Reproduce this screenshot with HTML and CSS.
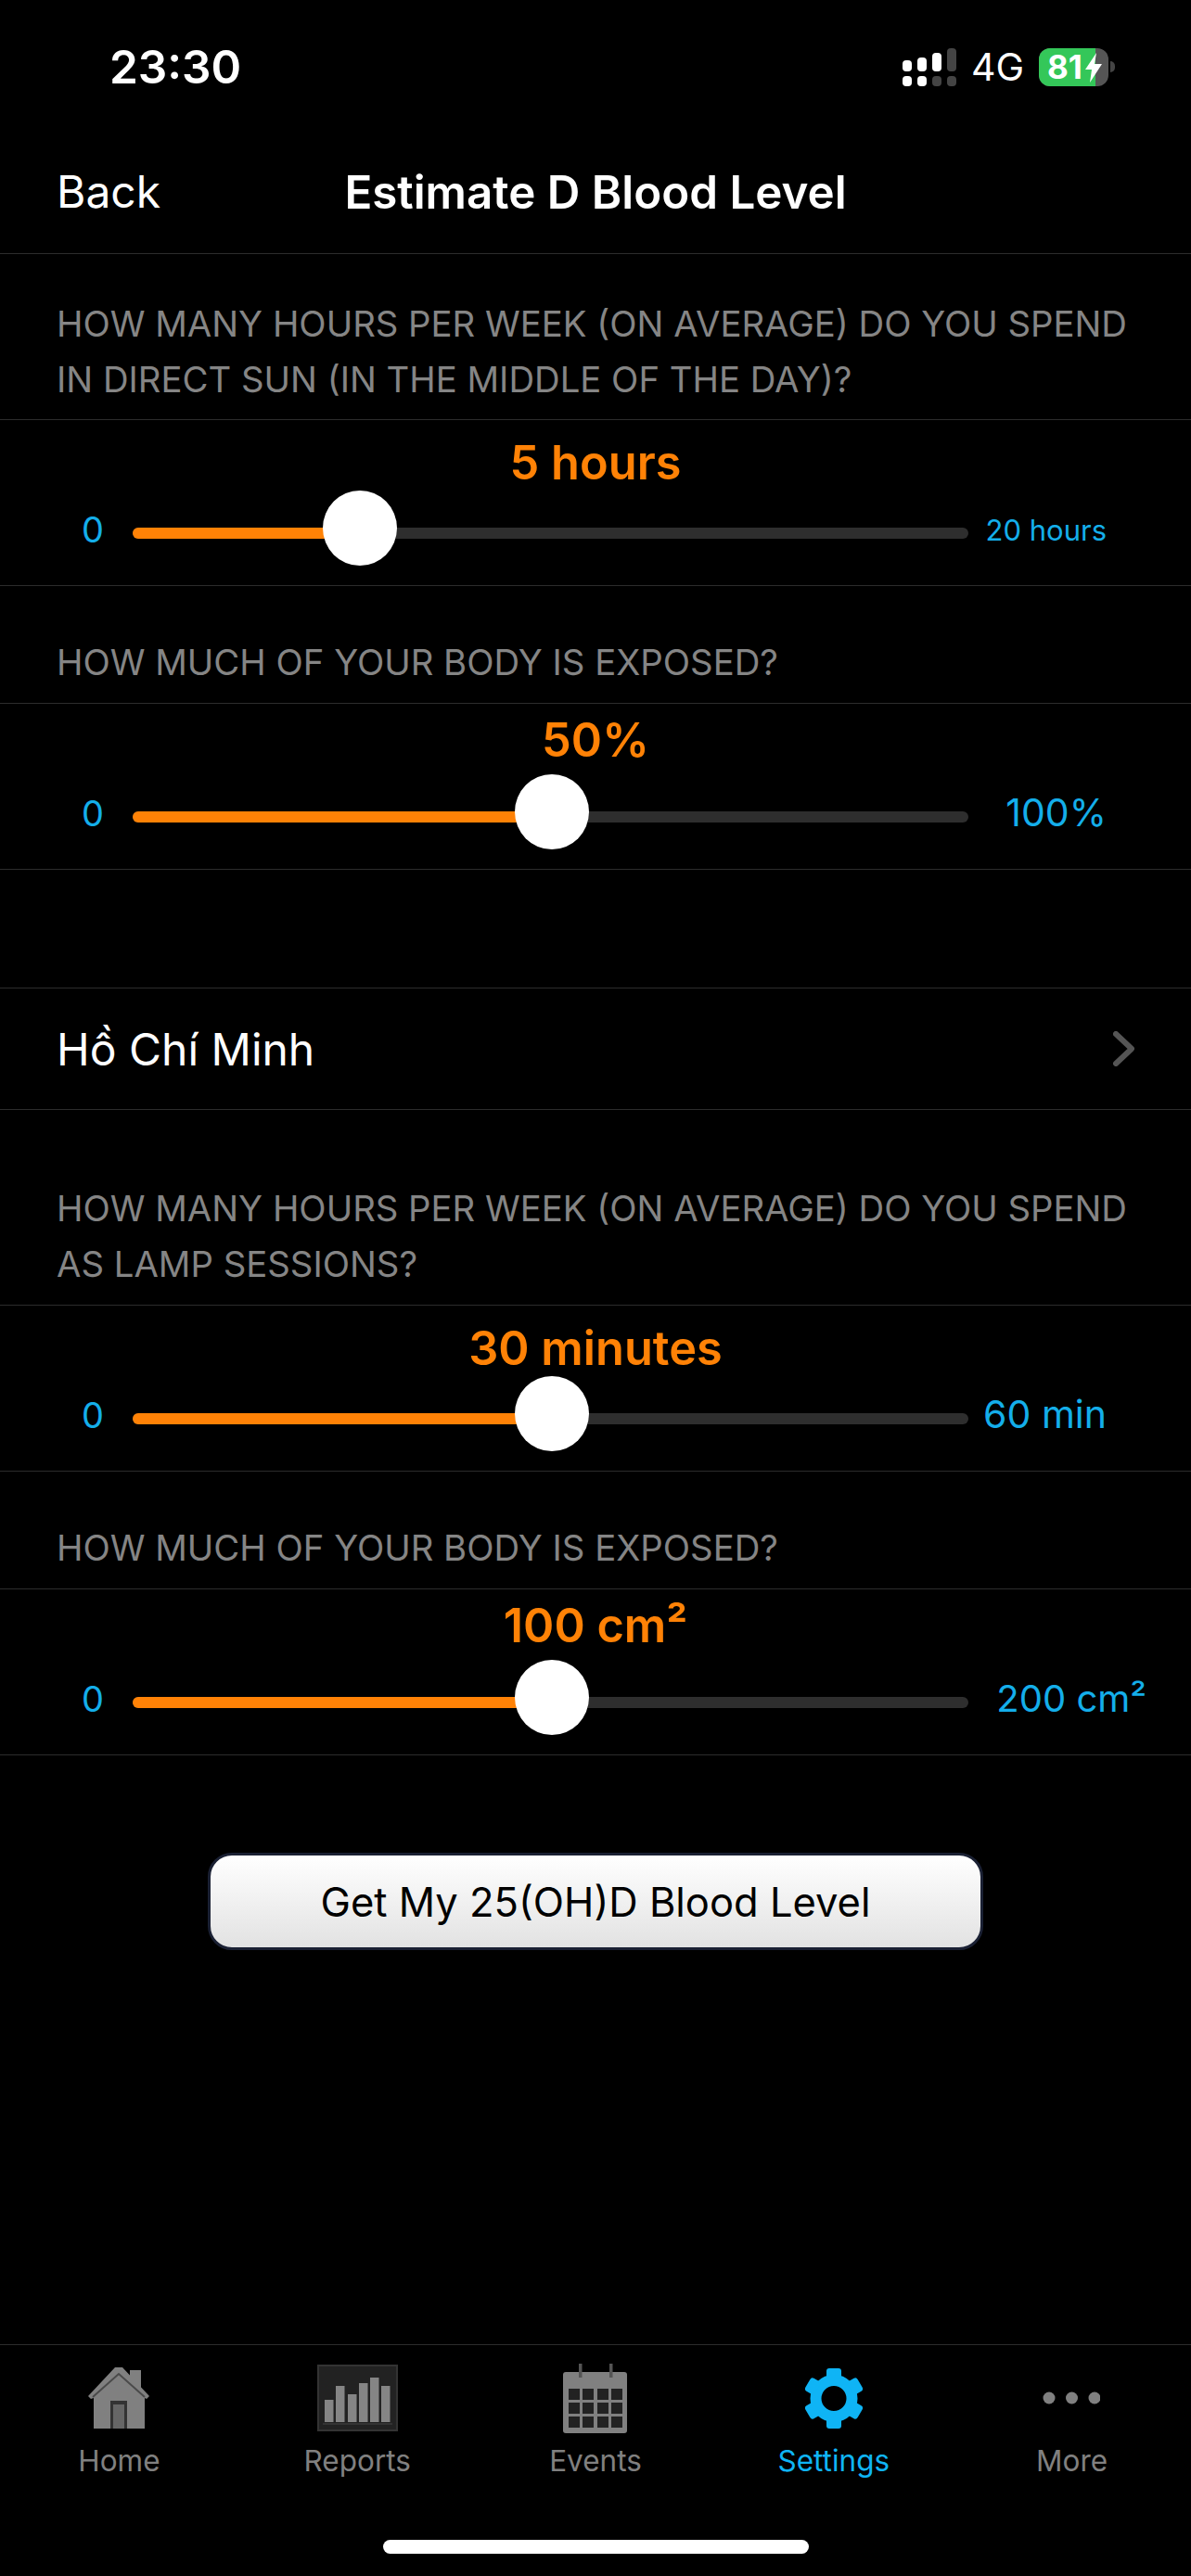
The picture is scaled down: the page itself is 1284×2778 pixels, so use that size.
FILE: index.html
```html
<!DOCTYPE html>
<html lang="en">
<head>
  <meta charset="UTF-8" />
  <meta name="viewport" content="width=device-width, initial-scale=1.0" />
  <title>Estimate D Blood Level</title>
  <link rel="stylesheet" href="styles.css">
</head>
<body>
  <div class="screen">
    <div class="status-bar">
      <span class="time">23:30</span>
      <svg class="signal" width="58" height="41" viewBox="0 0 58 41">
        <rect x="0" y="13" width="10" height="12" rx="4" fill="#fff" />
        <rect x="16" y="10" width="10" height="15" rx="4" fill="#fff" />
        <rect x="32" y="5" width="10" height="20" rx="4" fill="#fff" />
        <rect x="48" y="0" width="10" height="25" rx="4" fill="#444" />
        <rect x="0" y="30" width="10" height="11" rx="4" fill="#fff" />
        <rect x="16" y="30" width="10" height="11" rx="4" fill="#fff" />
        <rect x="32" y="30" width="10" height="11" rx="4" fill="#444" />
        <rect x="48" y="30" width="10" height="11" rx="4" fill="#444" />
      </svg>
      <span class="network">4G</span>
      <div class="battery">
        <div class="battery-level">81</div>
        <svg class="bolt" width="18" height="32" viewBox="0 0 18 32">
          <path d="M12 0 L0 18 H7 L5 32 L18 12 H10 Z" fill="#fff" />
        </svg>
      </div>
      <span class="battery-nub"></span>
    </div>

    <div class="nav-bar">
      <span class="nav-back">Back</span>
      <span class="nav-title">Estimate D Blood Level</span>
    </div>

    <div class="content">
      <div class="section-label">HOW MANY HOURS PER WEEK (ON AVERAGE) DO YOU SPEND IN DIRECT SUN (IN THE MIDDLE OF THE DAY)?</div>
      <div class="slider-row">
        <div class="slider-value">5 hours</div>
        <div class="slider-controls">
          <span class="slider-min">0</span>
          <div class="track">
            <div class="track-fill" style="width: 245px"></div>
            <div class="thumb" style="left: 205px"></div>
          </div>
          <span class="slider-max small">20 hours</span>
        </div>
      </div>

      <div class="section-label single">HOW MUCH OF YOUR BODY IS EXPOSED?</div>
      <div class="slider-row">
        <div class="slider-value">50%</div>
        <div class="slider-controls">
          <span class="slider-min">0</span>
          <div class="track">
            <div class="track-fill" style="width: 450px"></div>
            <div class="thumb" style="left: 412px"></div>
          </div>
          <span class="slider-max">100%</span>
        </div>
      </div>

      <div class="location-row">
        <span>Hồ Chí Minh</span>
        <svg class="chevron" width="23" height="38" viewBox="0 0 23 38">
          <path d="M3 3 L20 19 L3 35" fill="none" stroke="#555" stroke-width="6" stroke-linecap="round" stroke-linejoin="round" />
        </svg>
      </div>

      <div class="section-label lamp">HOW MANY HOURS PER WEEK (ON AVERAGE) DO YOU SPEND AS LAMP SESSIONS?</div>
      <div class="slider-row">
        <div class="slider-value">30 minutes</div>
        <div class="slider-controls">
          <span class="slider-min">0</span>
          <div class="track">
            <div class="track-fill" style="width: 450px"></div>
            <div class="thumb" style="left: 412px"></div>
          </div>
          <span class="slider-max">60 min</span>
        </div>
      </div>

      <div class="section-label single">HOW MUCH OF YOUR BODY IS EXPOSED?</div>
      <div class="slider-row">
        <div class="slider-value">100 cm²</div>
        <div class="slider-controls">
          <span class="slider-min">0</span>
          <div class="track">
            <div class="track-fill" style="width: 450px"></div>
            <div class="thumb" style="left: 412px"></div>
          </div>
          <span class="slider-max wide">200 cm²</span>
        </div>
      </div>

      <div class="button-wrap">
        <button class="primary-btn">Get My 25(OH)D Blood Level</button>
      </div>
    </div>

    <div class="tab-bar">
      <div class="tab">
        <div class="tab-icon">
          <svg width="66" height="66" viewBox="0 0 66 66">
            <path d="M45 3 H57 V26 H45 Z" fill="#808080" />
            <path d="M0 31 L29 0 H37 L66 31 L63 34 L61 33 V66 H6 V33 L3 34 Z" fill="#808080" />
            <path d="M5 32 L33 7 L61 32" fill="none" stroke="#4a4a4a" stroke-width="2" />
            <rect x="24" y="36" width="18" height="30" fill="#333" />
            <rect x="27" y="40" width="12" height="26" fill="#666" />
          </svg>
        </div>
        <span>Home</span>
      </div>
      <div class="tab">
        <div class="tab-icon">
          <svg width="87" height="72" viewBox="0 0 87 72">
            <rect x="1" y="1" width="85" height="70" fill="#222" stroke="#333" stroke-width="2" />
            <rect x="8" y="38" width="9.5" height="24" fill="#858585" />
            <rect x="20" y="23" width="9.5" height="39" fill="#858585" />
            <rect x="33" y="32" width="9.5" height="30" fill="#858585" />
            <rect x="45" y="20" width="9.5" height="42" fill="#858585" />
            <rect x="57" y="14" width="9.5" height="48" fill="#858585" />
            <rect x="69" y="23" width="9.5" height="39" fill="#858585" />
            <rect x="6" y="63" width="75" height="2" fill="#333" />
          </svg>
        </div>
        <span>Reports</span>
      </div>
      <div class="tab">
        <div class="tab-icon">
          <svg width="69" height="75" viewBox="0 0 69 75">
            <rect y="9" width="69" height="66" rx="3" fill="#808080" />
            <rect x="17" y="0" width="3.5" height="15" fill="#555" />
            <rect x="50" y="0" width="3.5" height="15" fill="#555" />
            <g fill="#222">
              <rect x="6" y="27" width="12" height="12" />
              <rect x="21" y="27" width="12" height="12" />
              <rect x="37" y="27" width="12" height="12" />
              <rect x="52" y="27" width="12" height="12" />
              <rect x="6" y="42" width="12" height="12" />
              <rect x="21" y="42" width="12" height="12" />
              <rect x="37" y="42" width="12" height="12" />
              <rect x="52" y="42" width="12" height="12" />
              <rect x="6" y="57" width="12" height="12" />
              <rect x="21" y="57" width="12" height="12" />
              <rect x="37" y="57" width="12" height="12" />
              <rect x="52" y="57" width="12" height="12" />
            </g>
          </svg>
        </div>
        <span>Events</span>
      </div>
      <div class="tab active">
        <div class="tab-icon">
          <svg width="62" height="65" viewBox="0 0 62 65">
            <circle cx="31" cy="32.5" r="19.5" fill="none" stroke="#0fb4f5" stroke-width="12" />
            <g fill="#0fb4f5">
              <rect x="23" y="0" width="16" height="12" rx="3" />
              <rect x="23" y="0" width="16" height="12" rx="3" transform="rotate(60 31 32.5)" />
              <rect x="23" y="0" width="16" height="12" rx="3" transform="rotate(120 31 32.5)" />
              <rect x="23" y="0" width="16" height="12" rx="3" transform="rotate(180 31 32.5)" />
              <rect x="23" y="0" width="16" height="12" rx="3" transform="rotate(240 31 32.5)" />
              <rect x="23" y="0" width="16" height="12" rx="3" transform="rotate(300 31 32.5)" />
            </g>
          </svg>
        </div>
        <span>Settings</span>
      </div>
      <div class="tab">
        <div class="tab-icon more-icon">
          <svg width="62" height="14" viewBox="0 0 62 14">
            <circle cx="7" cy="7" r="6.5" fill="#808080" />
            <circle cx="31.5" cy="7" r="6.5" fill="#808080" />
            <circle cx="56" cy="7" r="6.5" fill="#808080" />
          </svg>
        </div>
        <span>More</span>
      </div>
    </div>

    <div class="home-area">
      <div class="home-indicator"></div>
    </div>
  </div>
</body>
</html>
```

FILE: styles.css
```css
body {
  margin: 0;
  background-color: #000;
  font-family: Inter, "Liberation Sans", Arial, sans-serif;
  color: #fff;
}
.screen {
  width: 1284px;
  height: 2778px;
  display: flex;
  flex-direction: column;
  overflow: hidden;
}

/* status bar */
.status-bar {
  height: 86px;
  padding-top: 52px;
  display: flex;
  align-items: flex-start;
}
.time {
  margin-left: 118px;
  width: 855px;
  font-size: 49.5px;
  line-height: 41px;
  font-weight: 600;
}
.network {
  margin-left: 16px;
  width: 73px;
  font-size: 41px;
  line-height: 41px;
}
.battery {
  width: 75px;
  height: 41px;
  border-radius: 12px;
  background-color: #555;
  display: flex;
  align-items: center;
  position: relative;
  overflow: hidden;
}
.battery-level {
  width: 61px;
  height: 41px;
  padding-left: 9px;
  box-sizing: border-box;
  background-color: #34c759;
  font-size: 35px;
  line-height: 41px;
  font-weight: 700;
}
.bolt {
  position: absolute;
  left: 50px;
  top: 5px;
}
.battery-nub {
  width: 5px;
  height: 12px;
  margin: 14px 0 0 2px;
  border-radius: 0 6px 6px 0;
  background-color: #444;
}

/* nav */
.nav-bar {
  height: 133px;
  padding: 2px 61px 0;
  display: grid;
  grid-template-columns: 1fr auto 1fr;
  align-items: center;
  border-bottom: 1px solid #2c2c2c;
  font-size: 48px;
}
.nav-title {
  font-size: 49.3px;
  font-weight: 600;
}

/* form rows */
.section-label {
  height: 179px;
  box-sizing: border-box;
  padding: 45px 50px 0 61px;
  border-bottom: 1px solid #2c2c2c;
  color: #858585;
  font-size: 38.3px;
  line-height: 60px;
}
.section-label.single {
  height: 127px;
  padding-top: 52px;
}
.section-label.lamp {
  height: 211px;
  padding-top: 76px;
}
.slider-row {
  height: 179px;
  box-sizing: border-box;
  padding-top: 16px;
  border-bottom: 1px solid #2c2c2c;
}
.slider-value {
  text-align: center;
  color: #ff8206;
  font-size: 50.5px;
  line-height: 60px;
  font-weight: 600;
}
.section-label.single + .slider-row .slider-value {
  margin-top: -7px;
  margin-bottom: 7px;
}
.slider-controls {
  height: 92px;
  display: flex;
  align-items: center;
  color: #14aeea;
  font-size: 41px;
}
.slider-min {
  width: 86px;
  padding-left: 57px;
  margin-bottom: 8px;
  text-align: center;
  font-size: 38px;
}
.slider-max {
  width: 149px;
  margin-bottom: 10px;
  text-align: right;
  white-space: nowrap;
}
.slider-max.small {
  margin-bottom: 8px;
  font-size: 31px;
}
.slider-max.wide {
  width: 192px;
  margin-right: -43px;
  font-size: 40px;
}
.track {
  width: 901px;
  height: 12px;
  border-radius: 6px;
  background-color: #2e2e2e;
  position: relative;
}
.track-fill {
  height: 12px;
  border-radius: 6px;
  background-color: #ff8206;
}
.thumb {
  position: absolute;
  top: -40px;
  width: 80px;
  height: 81px;
  border-radius: 50%;
  background-color: #fff;
}
.location-row {
  height: 130px;
  margin-top: 127px;
  padding: 0 61px;
  display: flex;
  justify-content: space-between;
  align-items: center;
  border-top: 1px solid #2c2c2c;
  border-bottom: 1px solid #2c2c2c;
  font-size: 48px;
}
.button-wrap {
  display: flex;
  justify-content: center;
  padding-top: 105px;
}
.primary-btn {
  width: 836px;
  height: 105px;
  border: 3px solid #1a2033;
  border-radius: 26px;
  background: linear-gradient(#fff, #e2e2e2);
  color: #000;
  font-family: inherit;
  font-size: 43.5px;
}
.content {
  flex: 1;
}

/* tabs */
.tab-bar {
  height: 168px;
  display: flex;
  border-top: 1px solid #2c2c2c;
}
.tab {
  flex: 1;
  display: flex;
  flex-direction: column;
  align-items: center;
  color: #808080;
  font-size: 31.5px;
}
.tab.active {
  color: #0fb4f5;
}
.tab-icon {
  height: 80px;
  margin: 17px 0 8px;
  display: flex;
  align-items: center;
}
.more-icon {
  margin-right: 2px;
}
.home-area {
  height: 81px;
  display: flex;
  justify-content: center;
}
.home-indicator {
  width: 459px;
  height: 15px;
  margin-top: 42px;
  border-radius: 8px;
  background-color: #fff;
}
```
